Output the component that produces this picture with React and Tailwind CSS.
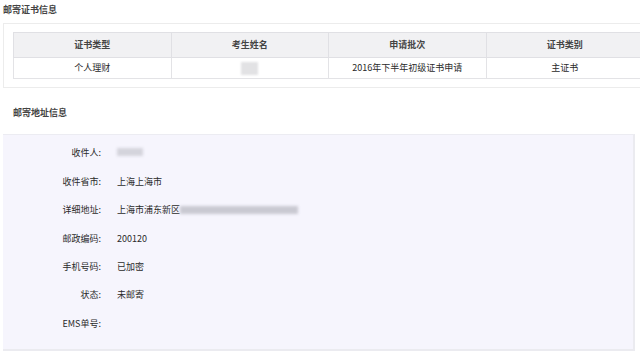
const font = { fontFamily: '"Noto Sans CJK SC", "Liberation Sans", sans-serif' }

const columns = ['证书类型', '考生姓名', '申请批次', '证书类别']

const rows = [
  { label: '收件人:', value: <span className="inline-block h-[8px] w-[26px] bg-[#d4d4dc] blur-[1.5px]" /> },
  { label: '收件省市:', value: '上海上海市' },
  {
    label: '详细地址:',
    value: (
      <span className="flex items-center">
        上海市浦东新区
        <span className="inline-block h-[8px] w-[118px] bg-[#c9c9d2] blur-[1.5px]" />
      </span>
    ),
  },
  { label: '邮政编码:', value: '200120' },
  { label: '手机号码:', value: '已加密' },
  { label: '状态:', value: '未邮寄' },
  { label: 'EMS单号:', value: '' },
]

export default function App() {
  return (
    <main className="h-[351px] w-[640px] overflow-hidden bg-white text-[9px] text-[#2a2a2a]" style={font}>
      <h2 className="pl-[3px] pt-[4px] text-[9px] font-bold leading-[12px] text-[#444]">邮寄证书信息</h2>

      <section className="ml-[3px] mt-[7px] w-[650px] border border-[#ececec] py-[8px] pl-[9px]">
        <table className="w-[631px] table-fixed border-collapse text-center">
          <thead>
            <tr className="h-[25px] bg-[#f1f1f3]">
              {columns.map((col) => (
                <th key={col} className="border border-[#e0e0e4] font-bold text-[#444]">
                  {col}
                </th>
              ))}
            </tr>
          </thead>
          <tbody>
            <tr className="h-[21px]">
              <td className="border border-[#e3e3e6]">个人理财</td>
              <td className="border border-[#e3e3e6]">
                <span className="inline-block h-[13px] w-[17px] bg-[#e2e2e4] align-middle blur-[1px]" />
              </td>
              <td className="border border-[#e3e3e6]">2016年下半年初级证书申请</td>
              <td className="border border-[#e3e3e6]">主证书</td>
            </tr>
          </tbody>
        </table>
      </section>

      <h2 className="mt-[19px] pl-[13px] text-[9px] font-bold leading-[12px] text-[#444]">邮寄地址信息</h2>

      <section className="ml-[3px] mt-[15px] w-[632px] border-t border-r-2 border-b-2 border-t-[#ececf2] border-r-[#ebebf0] border-b-[#ebebf0] bg-[#f6f5fd] pb-[11px] pt-[4px]">
        {rows.map((row) => (
          <div key={row.label} className="flex h-[28.4px] items-center">
            <span className="w-[98px] text-right">{row.label}</span>
            <span className="ml-[16px]">{row.value}</span>
          </div>
        ))}
      </section>
    </main>
  )
}
